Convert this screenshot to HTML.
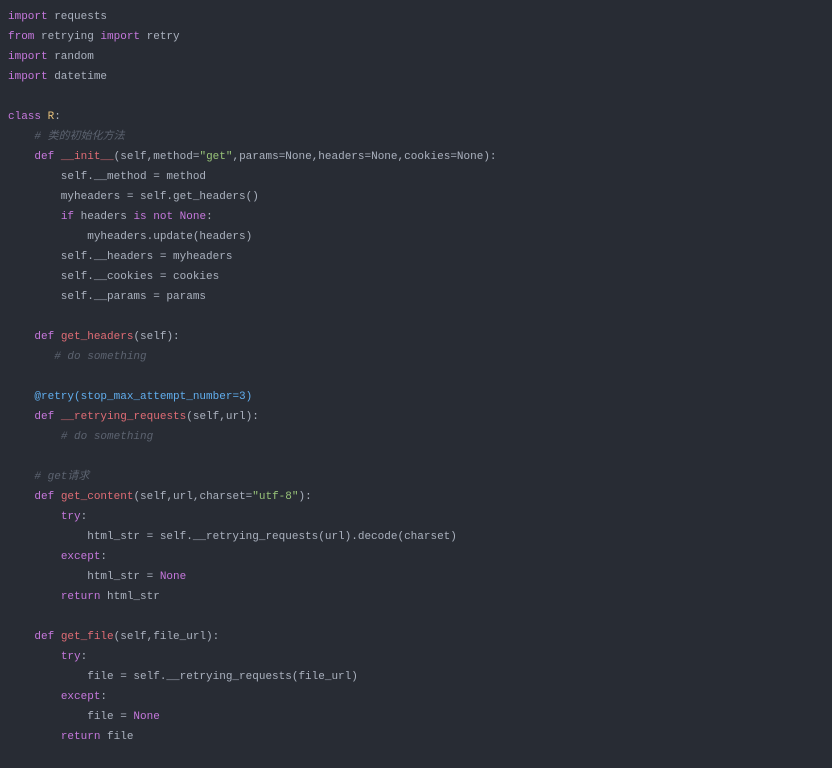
<!DOCTYPE html>
<html><head><meta charset="utf-8"><style>
html,body{margin:0;padding:0;background:#282c34;width:832px;height:768px;overflow:hidden}
pre{margin:0;padding:7px 8px;font-family:"Liberation Mono","Noto Sans CJK SC",monospace;font-size:11px;line-height:20px;color:#abb2bf;white-space:pre}
.k{color:#c678dd}.f{color:#e06c75}.s{color:#98c379}.c{color:#5c6370;font-style:italic}.d{color:#61aeee}.t{color:#e6c07b}
</style></head><body><pre><span class="k">import</span> requests
<span class="k">from</span> retrying <span class="k">import</span> retry
<span class="k">import</span> random
<span class="k">import</span> datetime

<span class="k">class</span> <span class="t">R</span>:
    <span class="c"># 类的初始化方法</span>
    <span class="k">def</span> <span class="f">__init__</span>(self,method=<span class="s">"get"</span>,params=None,headers=None,cookies=None):
        self.__method = method
        myheaders = self.get_headers()
        <span class="k">if</span> headers <span class="k">is</span> <span class="k">not</span> <span class="k">None</span>:
            myheaders.update(headers)
        self.__headers = myheaders
        self.__cookies = cookies
        self.__params = params

    <span class="k">def</span> <span class="f">get_headers</span>(self):
       <span class="c"># do something</span>

    <span class="d">@retry(stop_max_attempt_number=3)</span>
    <span class="k">def</span> <span class="f">__retrying_requests</span>(self,url):
        <span class="c"># do something</span>

    <span class="c"># get请求</span>
    <span class="k">def</span> <span class="f">get_content</span>(self,url,charset=<span class="s">"utf-8"</span>):
        <span class="k">try</span>:
            html_str = self.__retrying_requests(url).decode(charset)
        <span class="k">except</span>:
            html_str = <span class="k">None</span>
        <span class="k">return</span> html_str

    <span class="k">def</span> <span class="f">get_file</span>(self,file_url):
        <span class="k">try</span>:
            file = self.__retrying_requests(file_url)
        <span class="k">except</span>:
            file = <span class="k">None</span>
        <span class="k">return</span> file
</pre></body></html>
